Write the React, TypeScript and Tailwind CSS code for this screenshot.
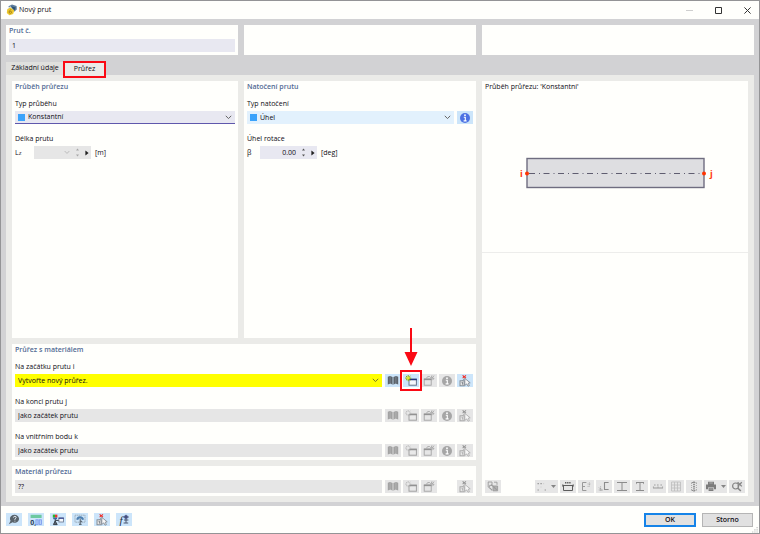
import React, { useState } from 'react';

type IconProps = { className?: string };

interface ToolButtonProps {
  label: string;
  active?: boolean;
  wide?: boolean;
  disabled?: boolean;
  children: React.ReactNode;
}

const ToolButton: React.FC<ToolButtonProps> = ({ label, active, wide, disabled, children }) => (
  <button
    type="button"
    aria-label={label}
    disabled={disabled}
    className={`flex h-[13px] shrink-0 items-center justify-center ${wide ? 'w-[23px] gap-1' : 'w-4'} ${
      active ? 'bg-[#cce5fa]' : 'bg-[#e6e6e6]'
    }`}
  >
    {children}
  </button>
);

const Chevron: React.FC<IconProps> = ({ className }) => (
  <svg viewBox="0 0 7 5" className={`pointer-events-none h-[5px] w-[7px] ${className ?? ''}`} fill="none" stroke="currentColor">
    <path d="M0.8 0.8 L3.5 3.6 L6.2 0.8" />
  </svg>
);

const CaretDown = () => (
  <svg viewBox="0 0 5 3" className="h-[3px] w-[5px]" fill="#858585">
    <path d="M0 0h5L2.5 3z" />
  </svg>
);

const AppLogo = () => (
  <svg viewBox="0 0 12 12" className="h-3 w-3">
    <path d="M2 2.6 L6 0.6 L10.6 2 L10.8 5.4 L8.2 7.8 L5.4 3.6z" fill="#5d7d9c" />
    <path d="M5 2.2 L9.6 3.4 L8.4 6.6z" fill="#2f536f" />
    <path d="M3.8 3.2 L8.2 6.2 L7.2 10 L3.4 11.2 L0.8 9 L1.2 5.4z" fill="#ecc62c" />
    <path d="M5.4 5.2 L3.2 7 Q2.6 9.4 4.4 9.4 Q6.2 9 5.4 7.6 Q4.2 7 3.4 8" fill="none" stroke="#9b7d16" strokeWidth="0.8" />
    <path d="M1.8 4.6 L5 2.4" stroke="#c5d6dd" strokeWidth="0.8" />
  </svg>
);

const BookIcon = ({ active }: { active?: boolean }) => (
  <svg viewBox="0 0 12 11" className="h-[11px] w-3" fill={active ? '#5c646c' : '#a2a2a2'}>
    <path d="M0.8 1.8 L3 1 L5.6 2 V9.8 L3.6 8.6 L0.8 9.6z" />
    <path d="M11.2 1.8 L9 1 L6.4 2 V9.8 L8.4 8.6 L11.2 9.6z" />
    <path d="M3.1 1.4v7.4M8.9 1.4v7.4" stroke={active ? '#8d99a4' : '#bcbcbc'} strokeWidth="0.6" />
  </svg>
);

const NewIcon = ({ active }: { active?: boolean }) => (
  <svg viewBox="0 0 12 11" className="h-[11px] w-3">
    <rect x="4" y="4.2" width="7.4" height="6" fill={active ? '#f4f8fb' : '#e9e9e9'} stroke={active ? '#67758a' : '#a2a2a2'} />
    <path d="M3.6 4.5h8.2" stroke={active ? '#23357c' : '#929292'} strokeWidth="1.5" />
    <path
      d="M3.2 0 V6.2 M0.2 3.1 H6.2 M1 1 L5.4 5.2 M5.4 1 L1 5.2"
      stroke={active ? '#8fb000' : '#b0b0b0'}
      strokeWidth={active ? 1 : 0.7}
    />
    <circle cx="3.2" cy="3.1" r="1.4" fill={active ? '#e3ea2c' : '#e6e6e6'} />
  </svg>
);

const OpenIcon = () => (
  <svg viewBox="0 0 12 11" className="h-[11px] w-3" fill="none" stroke="#a4a4a4" strokeWidth="0.9">
    <rect x="1.2" y="4" width="7" height="6.2" />
    <path d="M0.9 4.4h7.6" stroke="#939393" strokeWidth="1.5" />
    <path d="M3.4 3.4 Q4.2 0.8 6.6 1.6 L7.6 2.6 M9 0.4 L8 3 L11 3.4 L9.4 5.2 M11 0.6 L9.2 3" />
  </svg>
);

const InfoIcon = ({ active }: { active?: boolean }) => (
  <svg viewBox="0 0 12 12" className="h-3 w-3">
    <circle cx="6" cy="6" r="5" fill={active ? '#4d72e3' : '#a6a6a6'} />
    <circle cx="6" cy="3.2" r="0.9" fill="#fff" />
    <path d="M4.8 5.2H6.3V8.8M4.6 8.9H7.6" stroke="#fff" strokeWidth="1.1" fill="none" />
  </svg>
);

const PickIcon = ({ active }: { active?: boolean }) => (
  <svg viewBox="0 0 12 12" className="h-3 w-3" fill="none">
    <path d="M3.6 0.4 L7 3.2 M7 0.4 L3.6 3.2" stroke={active ? '#f0322c' : '#989898'} strokeWidth="1.1" />
    <path d="M5.4 3.4 L3.4 6" stroke={active ? '#838383' : '#aaa'} strokeWidth="0.7" />
    <rect x="1" y="5.8" width="4.2" height="5" fill={active ? '#e4e4e4' : '#e6e6e6'} stroke={active ? '#7d868e' : '#a4a4a4'} strokeWidth="0.9" />
    <path d="M2.6 7.4h1v2.2" stroke={active ? '#636b72' : '#a4a4a4'} strokeWidth="0.8" />
    <path
      d="M5.8 3.4 L11.2 7.8 L9.2 8.2 L10.4 10.6 L9 11.2 L7.8 8.9 L5.8 10.4z"
      fill="#f7f7f7"
      stroke={active ? '#7a828a' : '#a8a8a8'}
      strokeWidth="0.8"
    />
  </svg>
);

const SwapIcon = () => (
  <svg viewBox="0 0 12 11" className="h-[11px] w-3" fill="none" stroke="#9b9b9b" strokeWidth="0.9">
    <path d="M1 1h4v3.4h-2.4v2.4M7 1.2h3v2.6M1.2 1v5l1.6 1.4" />
    <path d="M6 5h4.6v4.8H6z" fill="#b2b2b2" />
    <path d="M6.8 6 L9.8 8.8 M3 7.2 L5.2 9.4 M4 3.6 L7 6" strokeWidth="1.1" />
  </svg>
);

const PointsIcon = () => (
  <svg viewBox="0 0 10 10" className="h-2.5 w-2.5" fill="#999">
    <path d="M0.5 1h1.4v1.2H0.5zM3.4 1h1.4v1.2H3.4zM0.5 7.4h1.4v1.2H0.5zM7.6 7.4H9v1.2H7.6z" />
    <path d="M6.4 1h.7v1.2h-.7zM3.6 4.6h.8v.8h-.8z" opacity="0.4" />
  </svg>
);

const DimensionIcon = () => (
  <svg viewBox="0 0 12 11" className="h-[11px] w-3" fill="none" stroke="#5c5c5c">
    <path d="M0.6 4.5h10.8M1.5 4.5v5h9v-5" />
    <path d="M3 1.8h6" strokeWidth="1.6" strokeDasharray="1.4 0.7" />
    <path d="M0.8 3.2v2.6M11.2 3.2v2.6" strokeWidth="0.8" />
  </svg>
);

const ChannelIcon = () => (
  <svg viewBox="0 0 12 11" className="h-[11px] w-3" fill="none" stroke="#999">
    <path d="M6.4 1.5H2.5v8h3.9M2.5 5.5h2.5" />
    <path d="M7.6 3h3.2M9.4 1.4v4M7.6 5.4h2" strokeWidth="0.7" strokeDasharray="1 0.7" />
  </svg>
);

const ChannelAxisIcon = () => (
  <svg viewBox="0 0 12 11" className="h-[11px] w-3" fill="none" stroke="#8c8c8c">
    <path d="M10.6 1.5H6.5v7h4.1" strokeWidth="1.1" />
    <path d="M0.8 9h4M2.6 5.4v4.4M1 6.6l3 3" strokeWidth="0.7" strokeDasharray="1 0.6" />
  </svg>
);

const BeamIcon = ({ narrow }: { narrow?: boolean }) => (
  <svg viewBox="0 0 12 11" className="h-[11px] w-3" fill="none" stroke="#8c8c8c">
    <path d={narrow ? 'M2 1.5h8M6 1.5v8M2 9.5h8' : 'M1 1.5h10M6 1.5v8M1 9.5h10'} />
    {narrow && <path d="M2.5 1.5v1.6M9.5 1.5v1.6" strokeWidth="0.7" />}
  </svg>
);

const SpacingIcon = () => (
  <svg viewBox="0 0 12 11" className="h-[11px] w-3" fill="none" stroke="#999">
    <path d="M1 7h10" />
    <path d="M1.4 5.4v1.4M6 5.4v1.4M10.6 5.4v1.4" strokeWidth="0.8" />
    <path d="M2 4h1.6M5 4h1.6M8.4 4H10" strokeWidth="0.9" />
  </svg>
);

const GridIcon = () => (
  <svg viewBox="0 0 12 11" className="h-[11px] w-3" fill="none" stroke="#bcbcbc" strokeWidth="0.8">
    <path d="M1.5 1h9v9h-9zM4.5 1v9M7.5 1v9M1.5 4h9M1.5 7h9" />
  </svg>
);

const AxisIcon = () => (
  <svg viewBox="0 0 12 11" className="h-[11px] w-3" fill="none" stroke="#8e8e8e">
    <path d="M3.6 1.5h4.8M3.6 9.5h4.8" strokeDasharray="1.4 0.6" />
    <path d="M6 0.6v9.8" strokeWidth="1.8" strokeDasharray="1.4 0.8" />
    <path d="M3.6 2v7M8.4 2v7" strokeWidth="0.7" strokeDasharray="1 1" />
  </svg>
);

const PrinterIcon = () => (
  <svg viewBox="0 0 12 11" className="h-[11px] w-3" fill="#7c7c7c">
    <path d="M3 0.8h6v2.6H3zM1 3.6h10v4.6H9V6.4H3v1.8H1zM3.6 7h4.8v3H3.6z" />
    <path d="M4.2 8h3.6M4.2 2h3.6" stroke="#d0d0d0" strokeWidth="0.6" />
  </svg>
);

const ZoomOffIcon = () => (
  <svg viewBox="0 0 12 11" className="h-[11px] w-3" fill="none" stroke="#858585">
    <circle cx="4.6" cy="5" r="3" strokeWidth="1.2" />
    <path d="M7 7.2l2.8 2.8" strokeWidth="1.6" />
    <path d="M6.6 1.2l4.2 4.2M10.8 1.2L6.6 5.4" strokeWidth="1.3" />
  </svg>
);

const HelpIcon = () => (
  <svg viewBox="0 0 12 11" className="h-[11px] w-3">
    <path d="M6.8 0.8a4.2 4 0 1 1-2.2 7.4L0.8 10.2l1.8-3.4A4.2 4 0 0 1 6.8 0.8z" fill="#59636b" />
    <path d="M5.4 3.6Q5.6 2.2 7 2.3Q8.6 2.6 8.1 3.8L6.9 5V5.9M6.9 6.7V7.6" fill="none" stroke="#e4edf4" strokeWidth="0.9" />
  </svg>
);

const DecimalsIcon = () => (
  <svg viewBox="0 0 12 12" className="h-3 w-3">
    <rect x="0.6" y="0.8" width="11" height="3.2" fill="#6cc9a0" />
    <text x="0.2" y="10.8" fontSize="7" fontWeight="700" fill="#2e3e58">0,</text>
    <rect x="5.9" y="5.8" width="2.2" height="4.6" fill="#b4cdf8" stroke="#7797ec" strokeWidth="0.8" />
    <rect x="9.2" y="5.8" width="2.2" height="4.6" fill="#b4cdf8" stroke="#7797ec" strokeWidth="0.8" />
  </svg>
);

const TreeIcon = () => (
  <svg viewBox="0 0 12 12" className="h-3 w-3">
    <path d="M0.8 0.6h2.2v3H0.8z" fill="#28b530" />
    <path d="M3 0.6h2.4v3H3z" fill="#e33b2e" />
    <path d="M1.2 3.6h3.8v1.6H1.2z" fill="#3a62a8" />
    <path d="M3.2 5v3M3.2 6.4H7M1.4 10.6L3.2 7l2 3.6z" fill="#5b6470" stroke="#39424c" strokeWidth="1" />
    <rect x="6.9" y="4" width="4.6" height="4" fill="#f5f9fc" stroke="#66748c" strokeWidth="0.8" />
    <path d="M6.6 4.2h5.2" stroke="#2c3d8e" strokeWidth="1.1" />
  </svg>
);

const ViewIcon = () => (
  <svg viewBox="0 0 12 12" className="h-3 w-3" fill="none">
    <path d="M1 1.2h10v7H1z" stroke="#97a8b5" strokeWidth="0.9" strokeDasharray="1.4 0.5" />
    <path d="M2.2 5.4Q3 2 6.2 2.2Q9.4 2.4 10 5.4L8 6Q7.4 4.2 6.2 4.2Q4.6 4.2 4.2 6z" fill="#4d7fb0" />
    <path d="M6.2 4.4v5.8M5 10.4h2.6M6 6.2L8 8" stroke="#606d78" strokeWidth="1.1" />
  </svg>
);

const FormulaIcon = () => (
  <svg viewBox="0 0 12 12" className="h-3 w-3">
    <text x="1.4" y="9.6" fontSize="11" fontStyle="italic" fontFamily="Liberation Serif, serif" fill="#27303a">f</text>
    <circle cx="8" cy="3" r="2" fill="#6672bc" />
    <path d="M5.4 3h5.4M8 0.8v8M6 6h4.4M5.6 9h4.6" stroke="#3b4560" strokeWidth="0.9" />
  </svg>
);

const Panel: React.FC<{ title?: string; className?: string; children?: React.ReactNode }> = ({ title, className, children }) => (
  <section className={`bg-[#fffffc] px-[3px] pb-[3px] ${className ?? ''}`}>
    {title && <h2 className="font-semibold leading-3 text-[#526a94]">{title}</h2>}
    {children}
  </section>
);

interface TypeSelectProps {
  id: string;
  label: string;
  value: string;
  focused?: boolean;
  children?: React.ReactNode;
}

const TypeSelect: React.FC<TypeSelectProps> = ({ id, label, value, focused, children }) => (
  <div className="mt-[5px]">
    <label htmlFor={id} className="mb-px block leading-3">{label}</label>
    <div className="flex gap-[3px]">
      <div className="relative min-w-0 flex-1">
        <select
          id={id}
          className={`block h-[13px] w-full appearance-none rounded-none pl-[13px] leading-3 outline-none ${
            focused ? 'border-b border-[#5f58ac] bg-[#e8e8f1]' : 'bg-[#e2f1fd]'
          }`}
        >
          <option>{value}</option>
        </select>
        <span className="pointer-events-none absolute left-[3px] top-[3px] h-[7px] w-[7px] bg-[#3ba3fb]" />
        <Chevron className="absolute right-[3px] top-1 text-[#666]" />
      </div>
      {children}
    </div>
  </div>
);

interface NumberFieldProps {
  id: string;
  label: string;
  symbol: React.ReactNode;
  unit: string;
  value: string;
  disabled?: boolean;
  symbolClass: string;
}

const NumberField: React.FC<NumberFieldProps> = ({ id, label, symbol, unit, value, disabled, symbolClass }) => {
  const [text, setText] = useState(value);

  return (
    <div className="mt-[9px]">
      <label htmlFor={id} className="mb-px block leading-3">{label}</label>
      <div className="flex items-center leading-3">
        <span className={symbolClass}>{symbol}</span>
        <div className={`flex h-[13px] w-[57px] items-center ${disabled ? 'bg-[#e6e6e6]' : 'bg-[#e8e8f1]'}`}>
          <input
            id={id}
            value={text}
            disabled={disabled}
            onChange={(e) => setText(e.target.value)}
            className="w-[30px] flex-1 bg-transparent text-right outline-none"
          />
          {disabled && <Chevron className="text-[#b4b4b4]" />}
          <button type="button" aria-label={`${label} krok`} className="mx-[5px]">
            <svg viewBox="0 0 5 9" className="h-[9px] w-[5px]" fill={disabled ? '#a6a6a6' : '#555'}>
              <path d="M1 2.4L2.5 0.6L4 2.4zM1 6.6L2.5 8.4L4 6.6z" />
            </svg>
          </button>
          <button type="button" aria-label={`${label} menu`} className="mr-[2px]">
            <svg viewBox="0 0 4 6" className="h-1.5 w-1" fill="#222">
              <path d="M0.4 0.4L3.6 3L0.4 5.6z" />
            </svg>
          </button>
        </div>
        <span className="ml-1">{unit}</span>
      </div>
    </div>
  );
};

/* red frame and arrow that mark the button for a new section */
const NewSectionMarker = () => (
  <>
    <span className="pointer-events-none absolute -inset-x-[3px] -inset-y-1 border-2 border-[#fa0a14]" />
    <svg viewBox="0 0 14 38" className="pointer-events-none absolute bottom-[21px] left-px h-[38px] w-[14px]" fill="#fa0a14">
      <path d="M6 0h2v24h5.5L7 38L0.5 24h5.5z" />
    </svg>
  </>
);

const SectionTools = ({ active, info = true }: { active?: boolean; info?: boolean }) => (
  <div className="flex gap-[2px]">
    <ToolButton label="Knihovna průřezů" active={active} disabled={!active}><BookIcon active={active} /></ToolButton>
    <div className="relative">
      <ToolButton label="Nový průřez" active={active} disabled={!active}><NewIcon active={active} /></ToolButton>
      {active && <NewSectionMarker />}
    </div>
    <ToolButton label="Upravit průřez" disabled><OpenIcon /></ToolButton>
    {info ? <ToolButton label="Informace" disabled><InfoIcon /></ToolButton> : <span className="w-4" />}
    <ToolButton label="Vybrat v grafice" active={active} disabled={!active}><PickIcon active={active} /></ToolButton>
  </div>
);

const SectionRow = ({ id, label, value }: { id: string; label: string; value: string }) => (
  <div className="mt-[9px]">
    <label htmlFor={id} className="mb-px block leading-3">{label}</label>
    <div className="flex gap-[3px]">
      <input id={id} readOnly value={value} className="h-[13px] min-w-0 flex-1 bg-[#e6e6e6] pl-[3px] outline-none" />
      <SectionTools />
    </div>
  </div>
);

const MemberDiagram = () => (
  <svg viewBox="0 0 200 34" className="h-[34px] w-[200px]">
    <rect x="12" y="2.5" width="177" height="29" fill="#dedee1" stroke="#6f6d80" strokeWidth="1.4" />
    <path d="M14 17.5h173" stroke="#5f5d70" strokeDasharray="6 4 1 3.5" />
    <circle cx="12" cy="17.5" r="2" fill="#ff3300" />
    <circle cx="189" cy="17.5" r="2" fill="#ff3300" />
    <text x="5" y="21" fontSize="9" fontWeight="700" fill="#ff3b0a">i</text>
    <text x="195" y="21" fontSize="9" fontWeight="700" fill="#ff3b0a">j</text>
  </svg>
);

const App: React.FC = () => {
  const [memberNo, setMemberNo] = useState('1');

  return (
    <div className="flex min-h-screen flex-col border border-[#949496] bg-[#fffffc] font-['Open_Sans','Noto_Sans',sans-serif] text-[7px] text-[#0e0b14]">
      <header className="flex h-[18px] items-center pl-[5px] pr-2">
        <AppLogo />
        <h1 className="ml-px flex-1 leading-3">Nový prut</h1>
        <div className="flex items-center gap-[22px] text-[#333]">
          <button type="button" aria-label="Minimalizovat" disabled>
            <svg viewBox="0 0 7 7" className="h-[7px] w-[7px]" stroke="#cfcfcf"><path d="M0 3.5h7" /></svg>
          </button>
          <button type="button" aria-label="Maximalizovat">
            <svg viewBox="0 0 7 7" className="h-[7px] w-[7px]" fill="none" stroke="currentColor"><path d="M0.5 0.5h6v6h-6z" /></svg>
          </button>
          <button type="button" aria-label="Zavřít">
            <svg viewBox="0 0 7 7" className="h-[7px] w-[7px]" stroke="currentColor"><path d="M0.4 0.4l6.2 6.2M6.6 0.4L0.4 6.6" /></svg>
          </button>
        </div>
      </header>

      <main className="flex flex-1 flex-col bg-[#d2d2d4] px-[5px] pb-1 pt-1.5">
        <div className="grid grid-cols-[232fr_232fr_272fr] gap-1.5">
          <Panel>
            <label htmlFor="member-no" className="mb-[2px] block font-semibold leading-3 text-[#526a94]">Prut č.</label>
            <input
              id="member-no"
              value={memberNo}
              onChange={(e) => setMemberNo(e.target.value)}
              className="block h-[13px] w-full bg-[#e8e8f1] pl-[3px] outline-none"
            />
          </Panel>
          <Panel />
          <Panel />
        </div>

        <div role="tablist" className="mt-[7px] flex h-[13px]">
          <button type="button" role="tab" aria-selected={false} className="w-[58px] bg-[#e0e0de]">Základní údaje</button>
          <button type="button" role="tab" aria-selected className="relative w-[41px] bg-[#ebebe8] pt-px">
            Průřez
            <span className="pointer-events-none absolute -bottom-[3px] -left-px -right-px -top-px border-2 border-[#fa0a14]" />
          </button>
        </div>

        <div role="tabpanel" className="grid flex-1 grid-cols-[464fr_266fr] gap-1.5 bg-[#ebebe8] p-1.5">
          <div className="flex flex-col gap-1.5">
            <div className="grid flex-1 grid-cols-[226fr_232fr] gap-1.5">
              <Panel title="Průběh průřezu">
                <TypeSelect id="distribution" label="Typ průběhu" value="Konstantní" focused />
                <NumberField
                  id="length"
                  label="Délka prutu"
                  symbol={<>L<sub className="bottom-0 text-[6px]">z</sub></>}
                  unit="[m]"
                  value=""
                  disabled
                  symbolClass="w-[19px]"
                />
              </Panel>
              <Panel title="Natočení prutu">
                <TypeSelect id="rotation-type" label="Typ natočení" value="Úhel">
                  <ToolButton label="Informace o natočení" active><InfoIcon active /></ToolButton>
                </TypeSelect>
                <NumberField id="rotation" label="Úhel rotace" symbol="β" unit="[deg]" value="0.00" symbolClass="w-[13px]" />
              </Panel>
            </div>

            <Panel title="Průřez s materiálem">
              <div className="mt-[5px]">
                <label htmlFor="section-i" className="mb-px block leading-3">Na začátku prutu i</label>
                <div className="flex gap-[3px]">
                  <div className="relative min-w-0 flex-1">
                    <select id="section-i" className="block h-[13px] w-full appearance-none rounded-none bg-[#ffff00] pl-[3px] leading-3 outline-none">
                      <option>Vytvořte nový průřez.</option>
                    </select>
                    <Chevron className="absolute right-[3px] top-1 text-[#77772a]" />
                  </div>
                  <SectionTools active />
                </div>
              </div>
              <SectionRow id="section-j" label="Na konci prutu j" value="Jako začátek prutu" />
              <SectionRow id="section-k" label="Na vnitřním bodu k" value="Jako začátek prutu" />
            </Panel>

            <Panel>
              <label htmlFor="material" className="mb-[2px] block font-semibold leading-3 text-[#526a94]">Materiál průřezu</label>
              <div className="flex gap-[3px]">
                <input id="material" readOnly value="??" className="h-[13px] min-w-0 flex-1 bg-[#e6e6e6] pl-[3px] outline-none" />
                <SectionTools info={false} />
              </div>
            </Panel>
          </div>

          <Panel className="flex flex-col">
            <p className="leading-3">Průběh průřezu: 'Konstantní'</p>
            <div className="-mx-[3px] flex h-40 items-center justify-center border-b border-[#ededeb]">
              <MemberDiagram />
            </div>
            <div className="mt-auto flex gap-[2px]">
              <ToolButton label="Zaměnit" disabled><SwapIcon /></ToolButton>
              <span className="flex-1" />
              <ToolButton label="Body" wide disabled><PointsIcon /><CaretDown /></ToolButton>
              <ToolButton label="Kóty" disabled><DimensionIcon /></ToolButton>
              <ToolButton label="Profil" disabled><ChannelIcon /></ToolButton>
              <ToolButton label="Osy profilu" disabled><ChannelAxisIcon /></ToolButton>
              <ToolButton label="Nosník" disabled><BeamIcon /></ToolButton>
              <ToolButton label="Úzký nosník" disabled><BeamIcon narrow /></ToolButton>
              <ToolButton label="Rozteče" disabled><SpacingIcon /></ToolButton>
              <ToolButton label="Rastr" disabled><GridIcon /></ToolButton>
              <ToolButton label="Osy" disabled><AxisIcon /></ToolButton>
              <ToolButton label="Tisk" wide disabled><PrinterIcon /><CaretDown /></ToolButton>
              <ToolButton label="Zrušit zvětšení" disabled><ZoomOffIcon /></ToolButton>
            </div>
          </Panel>
        </div>
      </main>

      <footer className="relative flex h-[27px] items-center px-[5px]">
        <div className="flex gap-1.5">
          <ToolButton label="Nápověda" active><HelpIcon /></ToolButton>
          <ToolButton label="Desetinná místa" active><DecimalsIcon /></ToolButton>
          <ToolButton label="Navigátor" active><TreeIcon /></ToolButton>
          <ToolButton label="Zobrazení" active><ViewIcon /></ToolButton>
          <ToolButton label="Vybrat objekt" active><PickIcon active /></ToolButton>
          <ToolButton label="Vzorec" active><FormulaIcon /></ToolButton>
        </div>
        <div className="ml-auto flex gap-1.5 pr-px">
          <button type="button" className="h-[14px] w-[52px] border-2 border-[#1583e8] bg-[#e1e1e1] font-semibold leading-[10px]">OK</button>
          <button type="button" className="h-[14px] w-[51px] border border-[#b5b5b5] bg-[#e1e1e1] font-semibold leading-3">Storno</button>
        </div>
        <svg viewBox="0 0 6 6" className="absolute bottom-0 right-px h-1.5 w-1.5" fill="#bdbdbd">
          <path d="M4.5 0h1.2v1.2H4.5zM4.5 2.2h1.2v1.2H4.5zM4.5 4.4h1.2v1.2H4.5zM2.3 2.2h1.2v1.2H2.3zM2.3 4.4h1.2v1.2H2.3zM0.1 4.4h1.2v1.2H0.1z" />
        </svg>
      </footer>
    </div>
  );
};

export default App;
